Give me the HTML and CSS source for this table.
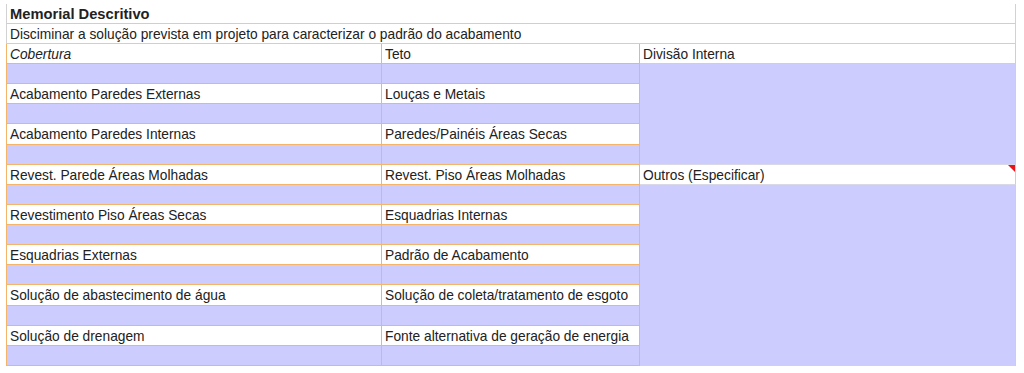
FILE: index.html
```html
<!DOCTYPE html>
<html lang="pt">
<head>
<meta charset="utf-8">
<title>Memorial Descritivo</title>
<link rel="stylesheet" href="styles.css">
</head>
<body>
<div class="sheet">
  <div class="cell span title">Memorial Descritivo</div>
  <div class="cell span">Disciminar a solução prevista em projeto para caracterizar o padrão do acabamento</div>
  <div class="cell head c1"><em>Cobertura</em></div>
  <div class="cell head c2">Teto</div>
  <div class="cell head c3">Divisão Interna</div>

  <div class="cell c1 fill"></div><div class="cell c2 fill"></div>
  <div class="cell c3 fill block-a"></div>
  <div class="cell c1">Acabamento Paredes Externas</div><div class="cell c2">Louças e Metais</div>
  <div class="cell c1 fill"></div><div class="cell c2 fill"></div>
  <div class="cell c1">Acabamento Paredes Internas</div><div class="cell c2">Paredes/Painéis Áreas Secas</div>
  <div class="cell c1 fill"></div><div class="cell c2 fill"></div>
  <div class="cell c1">Revest. Parede Áreas Molhadas</div><div class="cell c2">Revest. Piso Áreas Molhadas</div>
  <div class="cell c3 note">Outros (Especificar)</div>
  <div class="cell c1 fill"></div><div class="cell c2 fill"></div>
  <div class="cell c3 fill block-b"></div>
  <div class="cell c1">Revestimento Piso Áreas Secas</div><div class="cell c2">Esquadrias Internas</div>
  <div class="cell c1 fill"></div><div class="cell c2 fill"></div>
  <div class="cell c1">Esquadrias Externas</div><div class="cell c2">Padrão de Acabamento</div>
  <div class="cell c1 fill"></div><div class="cell c2 fill"></div>
  <div class="cell c1">Solução de abastecimento de água</div><div class="cell c2">Solução de coleta/tratamento de esgoto</div>
  <div class="cell c1 fill"></div><div class="cell c2 fill"></div>
  <div class="cell c1">Solução de drenagem</div><div class="cell c2">Fonte alternativa de geração de energia</div>
  <div class="cell c1 fill"></div><div class="cell c2 fill"></div>
</div>
</body>
</html>
```

FILE: styles.css
```css
html, body {
  margin: 0;
  padding: 0;
  background: #ffffff;
}

body {
  font-family: "Liberation Sans", Arial, sans-serif;
  font-size: 13.75px;
  color: #222222;
}

.sheet {
  display: grid;
  grid-template-columns: 376px 258px 376px;
  grid-template-rows: 20px 20px 20px repeat(15, 20.13px);
  grid-auto-flow: row dense;
  margin: 4px 0 0 6px;
  width: 1010px;
}

.cell {
  box-sizing: border-box;
  display: flex;
  align-items: center;
  padding: 2px 0 0 3px;
  white-space: nowrap;
  overflow: hidden;
  background: #ffffff;
  border-bottom: 1px solid #f4b469;
}

.span {
  grid-column: 1 / -1;
  border-left: 1px solid #d2d2d2;
  border-right: 1px solid #d2d2d2;
  border-bottom: 1px solid #cfcfcf;
}

.title {
  font-weight: bold;
  font-size: 14.7px;
  padding-top: 1px;
}

.c1 {
  grid-column: 1;
  border-left: 1px solid #f4b469;
  border-right: 1px solid #f4b469;
}

.c2 {
  grid-column: 2;
  border-right: 1px solid #f4b469;
}

.c3 {
  grid-column: 3;
  border-right: 1px solid #cfcfcf;
  border-bottom: 1px solid #d8d8e8;
}

.head.c3 {
  border-bottom: 1px solid #cfcfcf;
}

.head em {
  font-style: italic;
}

.fill {
  background: #ccccff;
}

.block-a {
  grid-row: 4 / span 5;
}

.note {
  grid-row: 9;
  position: relative;
}

.note::after {
  content: "";
  position: absolute;
  top: 0;
  right: 0;
  border-top: 7px solid #e8141a;
  border-left: 7px solid transparent;
}

.block-b {
  grid-row: 10 / span 9;
  border-bottom: 0;
}
```
